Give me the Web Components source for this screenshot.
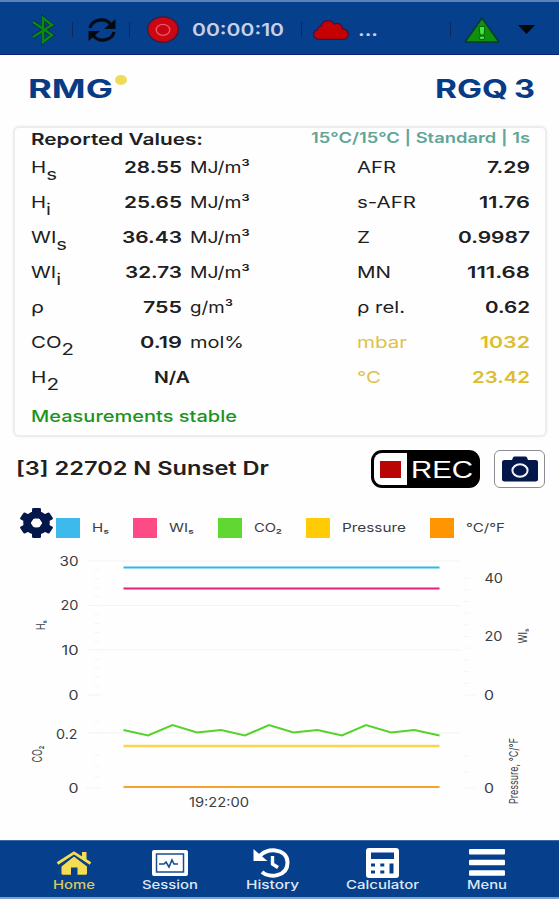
<!DOCTYPE html>
<html lang="en">
<head>
<meta charset="utf-8">
<title>RMG RGQ 3</title>
<style>
    html, body {
        margin: 0;
        background: #fefefe;
        font-family: Inter, "Liberation Sans", sans-serif;
        color: #202022;
    }
</style>
</head>
<body>
<gas-app></gas-app>

<script>
// Text stretched horizontally to a given width
class WideText extends HTMLElement {
    constructor() {
        super();
        this.attachShadow({ mode: 'open' });
    }

    connectedCallback() {
        const w = Number(this.getAttribute('w'));
        this.shadowRoot.innerHTML = `
            <style>
                :host { display: inline-block; width: ${w}px; white-space: nowrap; text-align: left; flex: none; }
                span { display: inline-block; transform-origin: 0 50%; }
                ::slotted(sub) { font-size: 1em; line-height: 0; vertical-align: -7px; }
            </style>
            <span><slot></slot></span>
        `;
        const span = this.shadowRoot.querySelector('span');
        const natural = span.getBoundingClientRect().width;
        if (natural) span.style.transform = `scaleX(${w / natural})`;
    }
}

class StatusBar extends HTMLElement {
    constructor() {
        super();
        this.attachShadow({ mode: 'open' });
    }

    connectedCallback() {
        this.shadowRoot.innerHTML = `
            <style>
                :host {
                    display: flex;
                    align-items: center;
                    box-sizing: border-box;
                    height: 55px;
                    padding: 3px 0 0 32px;
                    background: #063f8b;
                    border-top: 2px solid #5a84b6;
                    border-bottom: 1px solid #0a2078;
                    color: #c6d1e7;
                    font-size: 17.5px;
                    font-weight: 600;
                }
                svg { flex: none; overflow: visible; }
                i { flex: none; width: 1px; height: 15px; background: #062a61; }
                .sync { margin: 0 13px 0 15px; }
                .rec { margin: 0 13px 0 17px; }
                .time { margin-right: 17px; }
                .cloud { margin: 0 9px 0 11px; }
                .dots { margin-right: 72px; }
                .warn { margin: 0 18px 0 13px; }
            </style>
            <svg width="22" height="28" viewBox="0 0 22 28">
                <path d="M1 6 20 19 11 26V2l9 7L1 21" fill="none" stroke="#062f45" stroke-width="4"/>
                <path d="M1 6 20 19 11 26V2l9 7L1 21" fill="none" stroke="#078b16" stroke-width="2.4"/>
            </svg>
            <i style="margin-left:18px"></i>
            <svg class="sync" width="28" height="24" viewBox="0 0 28 24" fill="none" stroke="#050a12" stroke-width="3.2">
                <path d="M2 10C4 1 18-1 23 7M26 14C24 23 10 25 5 17"/>
                <path d="M27.5 1v10H16zM.5 23V13H12z" fill="#050a12" stroke="none"/>
            </svg>
            <i></i>
            <svg class="rec" width="32" height="27" viewBox="0 0 32 27">
                <ellipse cx="16" cy="13.5" rx="15.3" ry="12.7" fill="#cb0714" stroke="#401b3b" stroke-width="1.3"/>
                <ellipse cx="16" cy="13.8" rx="6.8" ry="5.5" fill="#c80613" stroke="#f05a64" stroke-width="1.3"/>
            </svg>
            <wide-text class="time" w="92">00:00:10</wide-text>
            <i></i>
            <svg class="cloud" width="36" height="20" viewBox="0 0 36 20">
                <path d="M6 19.3C2.500 19.300.7 17.200.7 14.300c0-2.500 1.700-4 4-4.500C4.200 8 6 6.300 8.300 6.200 8.500 2.500 12 .7 15 .7c3 0 5 1.400 6 3.200C25 2.400 29.500 4 29 8.500c4 .6 6.300 2.800 6.300 5.500 0 3-2.200 5.300-5.500 5.300z" fill="#c50202" stroke="#45123b" stroke-width="1.3"/>
            </svg>
            <wide-text class="dots" w="20">...</wide-text>
            <i></i>
            <svg class="warn" width="36" height="26" viewBox="0 0 36 26">
                <path d="M18 1 35 25H1z" fill="#11900e" stroke="#073b3a" stroke-width="1.7" stroke-linejoin="round"/>
                <path d="M15 9.500h6l-1 8.500h-4z" fill="#3ee83a" stroke="#075c0a"/>
                <ellipse cx="18" cy="20.800" rx="2.700" ry="2" fill="#3ee83a" stroke="#075c0a"/>
            </svg>
            <svg width="17" height="9" viewBox="0 0 17 9"><path d="M0 0h17L8.500 9z" fill="#050709"/></svg>
        `;
    }
}

class BrandHeader extends HTMLElement {
    constructor() {
        super();
        this.attachShadow({ mode: 'open' });
    }

    connectedCallback() {
        this.shadowRoot.innerHTML = `
            <style>
                :host {
                    display: flex;
                    justify-content: space-between;
                    height: 71px;
                    line-height: 68px;
                    padding: 0 24px 0 28px;
                    box-sizing: border-box;
                    color: #083b86;
                    font-size: 25.5px;
                    font-weight: 700;
                }
                .logo { display: flex; }
                .dot { width: 12px; height: 10px; margin: 20px 0 0 2px; border-radius: 50%; background: #f0da5a; }
                .model { display: flex; gap: 6px; }
            </style>
            <div class="logo"><wide-text w="85">RMG</wide-text><div class="dot"></div></div>
            <div class="model"><wide-text w="73">RGQ</wide-text><wide-text w="21">3</wide-text></div>
        `;
    }
}

// [label, label width, value, value width, unit, unit width, label, width, value, width]
const ROWS = [
    ['H<sub>s</sub>', 26, '28.55', 58, 'MJ/m³', 60, 'AFR', 39, '7.29', 43],
    ['H<sub>i</sub>', 20, '25.65', 58, 'MJ/m³', 60, 's-AFR', 59, '11.76', 51],
    ['WI<sub>s</sub>', 36, '36.43', 60, 'MJ/m³', 60, 'Z', 13, '0.9987', 72],
    ['WI<sub>i</sub>', 30, '32.73', 57, 'MJ/m³', 60, 'MN', 34, '111.68', 63],
    ['ρ', 13, '755', 39, 'g/m³', 43, 'ρ rel.', 48, '0.62', 45],
    ['CO<sub>2</sub>', 43, '0.19', 42, 'mol%', 54, 'mbar', 50, '1032', 50],
    ['H<sub>2</sub>', 28, 'N/A', 36, '', 0, '°C', 24, '23.42', 58]
];

class ValuesCard extends HTMLElement {
    constructor() {
        super();
        this.attachShadow({ mode: 'open' });
    }

    connectedCallback() {
        const rows = ROWS.map((r, i) => `
            <div class="row ${i > 4 ? 'ambient' : ''}">
                <wide-text w="${r[1]}">${r[0]}</wide-text>
                <b class="${r[4] ? '' : 'na'}"><wide-text w="${r[3]}">${r[2]}</wide-text></b>
                <span>${r[4] ? `<wide-text w="${r[5]}">${r[4]}</wide-text>` : ''}</span>
                <wide-text class="amb" w="${r[7]}">${r[6]}</wide-text>
                <b class="amb"><wide-text w="${r[9]}">${r[8]}</wide-text></b>
            </div>
        `).join('');
        this.shadowRoot.innerHTML = `
            <style>
                :host {
                    display: block;
                    box-sizing: border-box;
                    height: 311px;
                    margin: 0 12px 0 13px;
                    padding: 1px 15px 0 15.5px;
                    border: 2px solid #ededed;
                    border-radius: 6px;
                    box-shadow: 0 0 3px #f1f1f1;
                    font-size: 16.3px;
                }
                .head { display: flex; justify-content: space-between; height: 20.5px; line-height: 20.5px; }
                .head b { font-size: 16px; }
                .head .mode { font-size: 14.5px; font-weight: 600; color: #62a597; line-height: 17px; }
                .row {
                    display: grid;
                    grid-template-columns: 70px 81px 175.5px 70px 1fr;
                    height: 35.15px;
                    line-height: 35.15px;
                }
                b { font-weight: 600; text-align: right; }
                .row span { padding-left: 8.5px; }
                b.na { margin-right: -8px; }
                .ambient .amb { color: #dfc14a; }
                .ambient b.amb { color: #ddbd2b; }
                .stable { line-height: 42px; color: #1d931d; font-weight: 500; }
            </style>
            <div class="head">
                <b><wide-text w="172">Reported Values:</wide-text></b>
                <wide-text class="mode" w="219">15°C/15°C | Standard | 1s</wide-text>
            </div>
            ${rows}
            <div class="stable"><wide-text w="206">Measurements stable</wide-text></div>
        `;
    }
}

class SiteRow extends HTMLElement {
    constructor() {
        super();
        this.attachShadow({ mode: 'open' });
    }

    connectedCallback() {
        this.shadowRoot.innerHTML = `
            <style>
                :host {
                    display: flex;
                    align-items: center;
                    height: 38px;
                    margin-top: 13px;
                    padding: 0 14px 0 16px;
                    font-size: 18.7px;
                    font-weight: 600;
                }
                .name { margin-right: auto; line-height: 36px; }
                .rec {
                    display: flex;
                    box-sizing: border-box;
                    width: 109px;
                    height: 38px;
                    padding: 3px;
                    margin-right: 14px;
                    background: #000;
                    border-radius: 11px;
                    color: #fff;
                    font: 24px/33px "Liberation Sans", sans-serif;
                }
                .stop {
                    display: grid;
                    place-items: center;
                    width: 33px;
                    margin-right: 4px;
                    background: #fff;
                    border-radius: 8px 0 0 8px;
                }
                .stop i { width: 21px; height: 17px; background: #b90504; }
                .cam {
                    display: grid;
                    place-items: center;
                    box-sizing: border-box;
                    width: 51px;
                    height: 38px;
                    border: 1px solid #8c8c94;
                    border-radius: 6px;
                    background: #fff;
                }
            </style>
            <wide-text class="name" w="253">[3] 22702 N Sunset Dr</wide-text>
            <div class="rec"><div class="stop"><i></i></div><wide-text w="62">REC</wide-text></div>
            <div class="cam">
                <svg width="36" height="26" viewBox="0 0 36 26">
                    <path d="M2.500 4H10l1-2.500Q11.400.4 13 .4H23Q24.600.4 25 1.500L26 4h7.500Q36 4 36 6V23.500Q36 25.600 33.500 25.600H2.500Q0 25.600 0 23.500V6Q0 4 2.500 4z" fill="#03174b"/>
                    <ellipse cx="18" cy="14.500" rx="7.600" ry="6.200" fill="none" stroke="#f2f4fa" stroke-width="2"/>
                </svg>
            </div>
        `;
    }
}

const SERIES = [
    ['Hₛ', 17, '#3db9ee'],
    ['WIₛ', 25, '#fd4b85'],
    ['CO₂', 28, '#5fd932'],
    ['Pressure', 64, '#ffcb05'],
    ['°C/°F', 39, '#ff9500']
];

class ChartLegend extends HTMLElement {
    constructor() {
        super();
        this.attachShadow({ mode: 'open' });
    }

    connectedCallback() {
        const items = SERIES.map(([name, w, color]) => `
            <i style="background:${color}"></i><wide-text w="${w}">${name}</wide-text>
        `).join('');
        let teeth = '';
        for (let a = 0; a < 360; a += 60) {
            teeth += `<rect x="-4.500" y="-17" width="9" height="12" rx="1.500" transform="rotate(${a})"/>`;
        }
        this.shadowRoot.innerHTML = `
            <style>
                :host {
                    display: flex;
                    align-items: center;
                    height: 30px;
                    margin-top: 20px;
                    padding-left: 18.5px;
                    font-size: 12px;
                    color: #3c3c3e;
                }
                svg { margin: -1px 2.5px 0 0; }
                i { width: 24px; height: 20px; margin: 10px 11.5px 0 0; }
                wide-text { margin: 10px 24.5px 0 0; line-height: 20px; }
            </style>
            <svg width="35" height="30" viewBox="-17.500 -17 35 34" preserveAspectRatio="none" fill="#03174b">
                ${teeth}
                <circle r="9.500" fill="none" stroke="#03174b" stroke-width="7.500"/>
            </svg>
            ${items}
        `;
    }
}

class TrendChart extends HTMLElement {
    constructor() {
        super();
        this.attachShadow({ mode: 'open' });
    }

    connectedCallback() {
        const label = (x, y, w, t, anchor = 'start') =>
            `<text x="${x}" y="${y + 4.6}" text-anchor="${anchor}" textLength="${w}" lengthAdjust="spacingAndGlyphs">${t}</text>`;
        const side = (x, y, w, t, size) =>
            `<text transform="translate(${x} ${y}) rotate(-90)" font-size="${size}" text-anchor="middle" textLength="${w}" lengthAdjust="spacingAndGlyphs">${t}</text>`;
        const line = (x1, x2, y) => `M${x1} ${y}H${x2}`;

        let grid = [16, 60.5, 105, 188].map(y => line(88, 460, y)).join('');
        grid += line(88, 100, 150) + line(86, 100, 243) + line(465, 475, 150) + line(465, 475, 243);
        let minor = '';
        for (let y = 24.9; y < 150; y += 8.93) minor += line(94, 100, y);
        for (let y = 177; y < 243; y += 11) minor += line(94, 100, y);
        for (let y = 33; y < 150; y += 11.7) minor += line(464, 470, y);
        for (let y = 211; y < 240; y += 16) minor += line(464, 470, y);

        this.shadowRoot.innerHTML = `
            <style>
                :host { display: block; height: 295px; }
                svg { display: block; }
                text { font-family: Inter, "Liberation Sans", sans-serif; fill: #3c3c3e; }
            </style>
            <svg width="559" height="275" viewBox="0 0 559 275" font-size="12.800" fill="none">
                <path d="${grid}" stroke="#f3f3f4"/>
                <path d="${minor}" stroke="#f6f6f7"/>
                <g stroke-width="2">
                    <path d="M123.500 22.500H439.500" stroke="#2fb7e6"/>
                    <path d="M123.500 43.500H439.500" stroke="#e4207a"/>
                    <path d="M123.500 185 148 190.500 172.500 180 197 187.500 221 185 245 190.500 269 180 293.500 187.500 317.500 185 342 190.500 366 180 391 187.500 414.500 185 439.500 190.500" stroke="#55d32c"/>
                    <path d="M123.500 201H439.500" stroke="#fdd34c" stroke-width="2.500"/>
                    <path d="M123.500 242H439.500" stroke="#f6a22d"/>
                </g>
                ${label(78.5, 16.5, 19, '30', 'end')}
                ${label(78.5, 60.5, 18, '20', 'end')}
                ${label(78.5, 105.5, 17, '10', 'end')}
                ${label(78.5, 150, 10, '0', 'end')}
                ${label(77.5, 189, 21.5, '0.2', 'end')}
                ${label(78.5, 243.5, 10, '0', 'end')}
                ${label(484.5, 33.5, 18.5, '40')}
                ${label(484.5, 91.5, 18, '20')}
                ${label(484, 150, 10, '0')}
                ${label(484, 243.5, 10, '0')}
                ${label(189, 257.500, 60, '19:22:00')}
                ${side(45, 80, 10, 'Hₛ', 11.5)}
                ${side(42, 209, 17, 'CO₂', 13)}
                ${side(527, 91, 15, 'WIₛ', 11.5)}
                ${side(518, 226, 66, 'Pressure, °C/°F', 12)}
            </svg>
        `;
    }
}

class NavItem extends HTMLElement {
    constructor() {
        super();
        this.attachShadow({ mode: 'open' });
    }

    connectedCallback() {
        this.shadowRoot.innerHTML = `
            <style>
                :host { display: flex; flex-direction: column; align-items: center; color: #dfe7f5; }
                :host([active]) { color: #d9c95f; }
                .icon { height: 31px; display: flex; align-items: center; }
                .label { line-height: 14px; }
            </style>
            <div class="icon"><slot></slot></div>
            <wide-text class="label" w="${this.getAttribute('w')}">${this.getAttribute('label')}</wide-text>
        `;
    }
}

class NavBar extends HTMLElement {
    constructor() {
        super();
        this.attachShadow({ mode: 'open' });
    }

    connectedCallback() {
        this.shadowRoot.innerHTML = `
            <style>
                :host {
                    display: flex;
                    gap: 47.5px;
                    box-sizing: border-box;
                    height: 59px;
                    padding: 6px 0 0 52.5px;
                    background: #063f8b;
                    border-top: 1px solid #3c68a6;
                    border-bottom: 2px solid #7f9fca;
                    font-size: 12px;
                    font-weight: 500;
                }
            </style>
            <nav-item active w="42" label="Home">
                <svg width="36" height="24" viewBox="0 0 36 24" fill="#f6dc52">
                    <path d="M18 5.500 31 15.500V22.500Q31 23.800 29.500 23.800H21.500V16.500H15V23.800H7Q5.500 23.800 5.500 22.500V15.500z"/>
                    <path d="M1.500 13.500 18 1.800 34.500 13.500" fill="none" stroke="#063f8b" stroke-width="5.500"/>
                    <path d="M1.500 12.500 18 1.800 34.500 12.500" fill="none" stroke="#f6dc52" stroke-width="2.800"/>
                    <path d="M26 1h4.500v9L26 6.500z"/>
                </svg>
            </nav-item>
            <nav-item w="56" label="Session">
                <svg width="36" height="26" viewBox="0 0 36 26">
                    <rect width="36" height="26" rx="2" fill="#fff"/>
                    <rect x="4.500" y="4" width="27" height="18" fill="none" stroke="#174c91" stroke-width="1.500"/>
                    <path d="M7 14h5l2-2 3 5 3-7 2 4h4" fill="none" stroke="#174c91" stroke-width="1.600"/>
                </svg>
            </nav-item>
            <nav-item w="53" label="History">
                <svg width="38" height="30" viewBox="0 0 38 30" fill="none" stroke="#fff">
                    <path d="M6.500 8.500C12-.5 34-.5 34.500 14 35 28 17 31 9 24" stroke-width="4"/>
                    <path d="M.5 1v12H14.500z" fill="#fff" stroke="none"/>
                    <path d="M19.500 8v8l5.500 3.500" stroke-width="3.400"/>
                </svg>
            </nav-item>
            <nav-item w="73" label="Calculator">
                <svg width="33" height="30" viewBox="0 0 33 30" fill="#063f8b">
                    <rect width="33" height="30" rx="3" fill="#fff"/>
                    <path d="M5 4.500H28V11H5zM5 15.500h4v3H5zM14.300 15.500h4v3h-4zM5 22.500h4v3H5zM14.300 22.500h4v3h-4zM23.500 15.500h4v10h-4z"/>
                </svg>
            </nav-item>
            <nav-item w="40" label="Menu">
                <svg width="36" height="27" viewBox="0 0 36 27" fill="#fff">
                    <rect width="36" height="5.500" rx="1"/>
                    <rect y="10.700" width="36" height="5.500" rx="1"/>
                    <rect y="21.300" width="36" height="5.500" rx="1"/>
                </svg>
            </nav-item>
        `;
    }
}

class GasApp extends HTMLElement {
    constructor() {
        super();
        this.attachShadow({ mode: 'open' });
    }

    connectedCallback() {
        this.shadowRoot.innerHTML = `
            <style>
                :host { display: flex; flex-direction: column; width: 559px; height: 900px; overflow: hidden; }
                status-bar, brand-header, values-card, site-row, chart-legend, trend-chart, nav-bar { flex: none; }
                chart-legend { margin-bottom: 7px; }
            </style>
            <status-bar></status-bar>
            <brand-header></brand-header>
            <values-card></values-card>
            <site-row></site-row>
            <chart-legend></chart-legend>
            <trend-chart></trend-chart>
            <nav-bar></nav-bar>
        `;
    }
}

// Component registration
customElements.define('wide-text', WideText);
customElements.define('status-bar', StatusBar);
customElements.define('brand-header', BrandHeader);
customElements.define('values-card', ValuesCard);
customElements.define('site-row', SiteRow);
customElements.define('chart-legend', ChartLegend);
customElements.define('trend-chart', TrendChart);
customElements.define('nav-item', NavItem);
customElements.define('nav-bar', NavBar);
customElements.define('gas-app', GasApp);
</script>
</body>
</html>
